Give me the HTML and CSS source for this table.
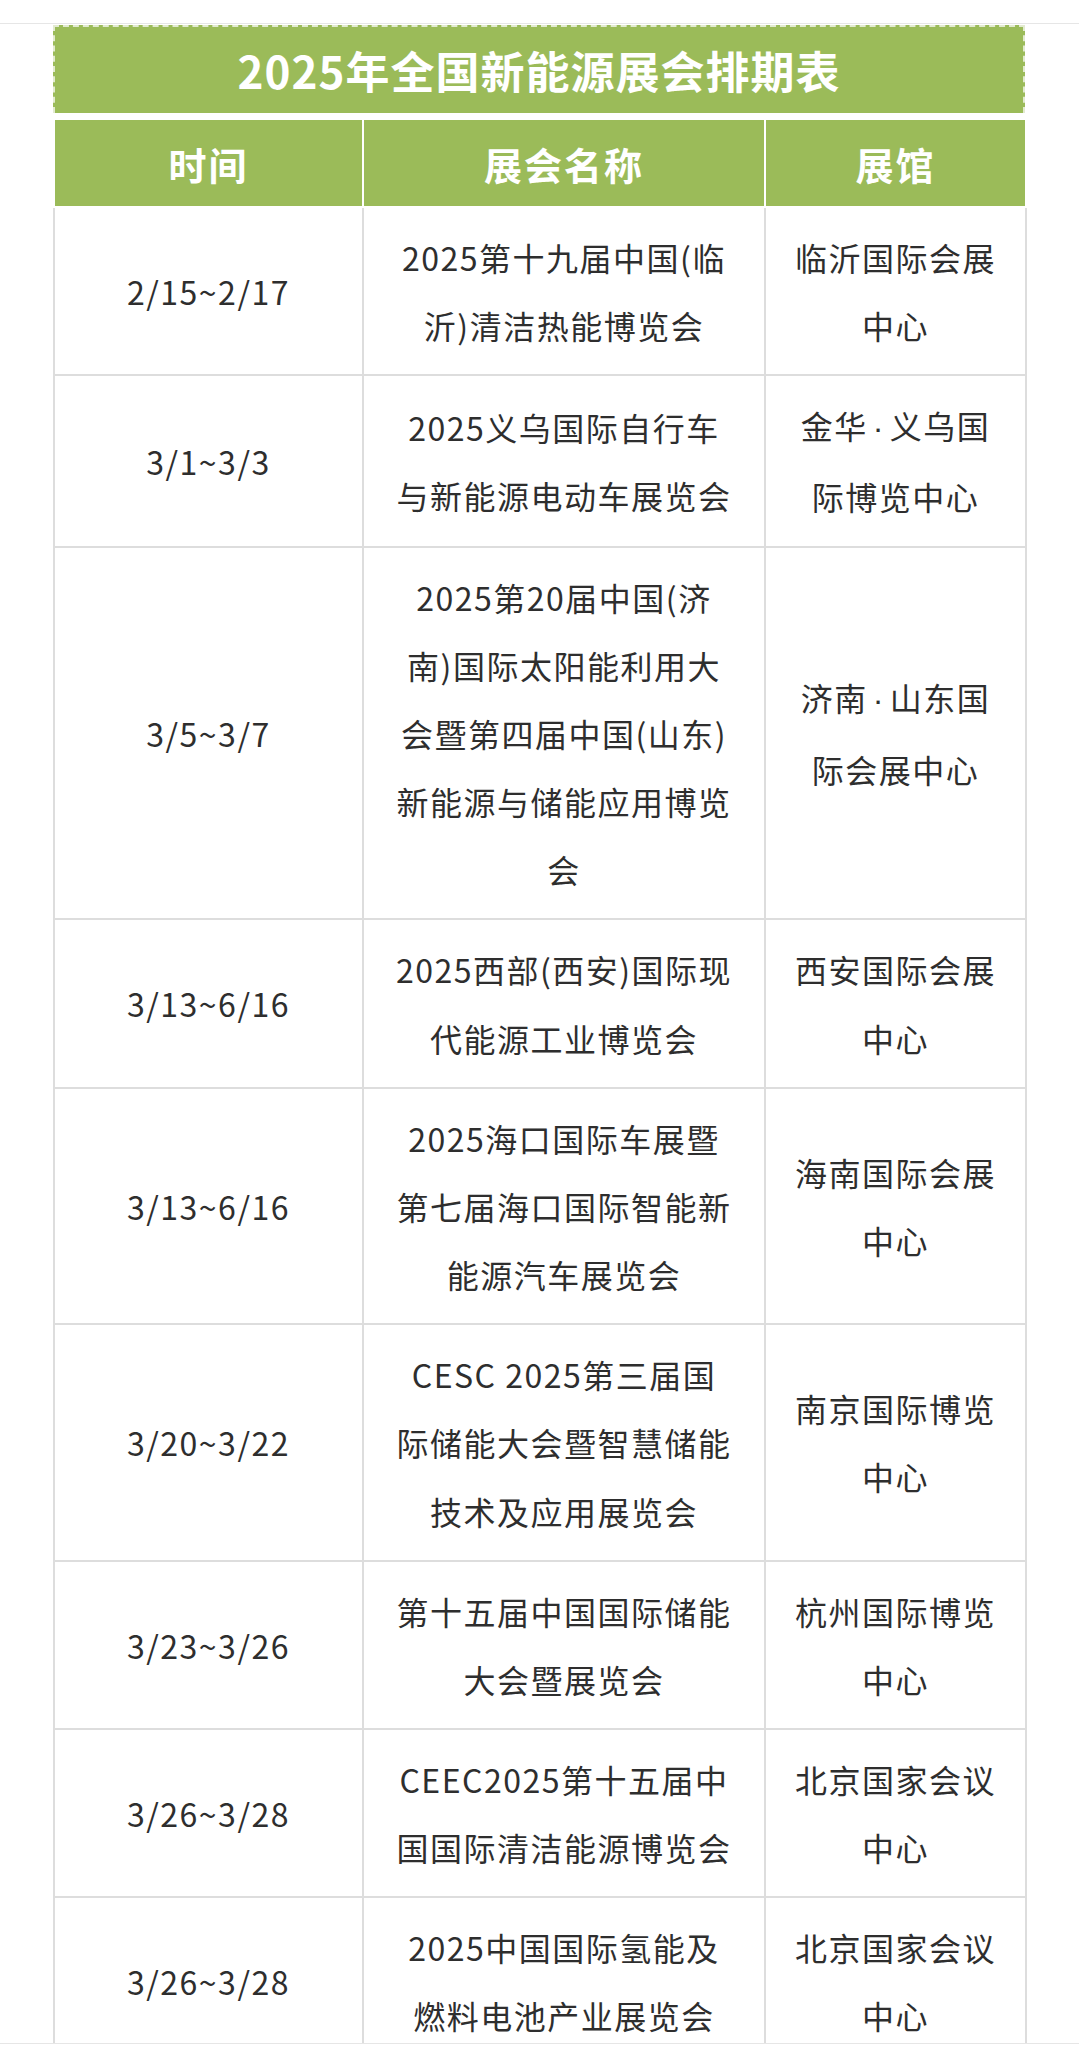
FILE: index.html
```html
<!DOCTYPE html>
<html lang="zh-CN">
<head>
<meta charset="utf-8">
<title>2025年全国新能源展会排期表</title>
<link rel="stylesheet" href="styles.css">
</head>
<body>
<div class="page">
  <div class="frame">
    <div class="sheet">
      <div class="title">2025年全国新能源展会排期表</div>
      <table class="schedule">
        <colgroup>
          <col class="c-date">
          <col class="c-name">
          <col class="c-venue">
        </colgroup>
        <thead>
          <tr><th>时间</th><th>展会名称</th><th>展馆</th></tr>
        </thead>
        <tbody>
          <tr><td>2/15~2/17</td><td>2025第十九届中国(临<br>沂)清洁热能博览会</td><td>临沂国际会展<br>中心</td></tr>
          <tr><td>3/1~3/3</td><td>2025义乌国际自行车<br>与新能源电动车展览会</td><td>金华<span class="dot">·</span>义乌国<br>际博览中心</td></tr>
          <tr><td>3/5~3/7</td><td>2025第20届中国(济<br>南)国际太阳能利用大<br>会暨第四届中国(山东)<br>新能源与储能应用博览<br>会</td><td>济南<span class="dot">·</span>山东国<br>际会展中心</td></tr>
          <tr><td>3/13~6/16</td><td>2025西部(西安)国际现<br>代能源工业博览会</td><td>西安国际会展<br>中心</td></tr>
          <tr><td>3/13~6/16</td><td>2025海口国际车展暨<br>第七届海口国际智能新<br>能源汽车展览会</td><td>海南国际会展<br>中心</td></tr>
          <tr><td>3/20~3/22</td><td>CESC 2025第三届国<br>际储能大会暨智慧储能<br>技术及应用展览会</td><td>南京国际博览<br>中心</td></tr>
          <tr><td>3/23~3/26</td><td>第十五届中国国际储能<br>大会暨展览会</td><td>杭州国际博览<br>中心</td></tr>
          <tr><td>3/26~3/28</td><td>CEEC2025第十五届中<br>国国际清洁能源博览会</td><td>北京国家会议<br>中心</td></tr>
          <tr><td>3/26~3/28</td><td>2025中国国际氢能及<br>燃料电池产业展览会</td><td>北京国家会议<br>中心</td></tr>
        </tbody>
      </table>
    </div>
  </div>
</div>
</body>
</html>
```

FILE: styles.css
```css
html, body {
  margin: 0;
  padding: 0;
  background: #ffffff;
}

body {
  font-family: "Noto Sans CJK SC", "Noto Sans", sans-serif;
  color: #2e2e2e;
}

.page {
  padding-top: 23px;
}

.frame {
  height: 2019px;
  overflow: hidden;
  border-top: 1px solid #e6e6e6;
  border-bottom: 1px solid #e6e6e6;
}

.sheet {
  width: 972px;
  margin-left: 53px;
  padding-top: 1px;
}

.title {
  box-sizing: border-box;
  height: 88px;
  background: #9bbb59;
  border: 2px dashed #e2ead0;
  border-bottom: none;
  color: #ffffff;
  font-weight: 700;
  font-size: 44px;
  letter-spacing: 1px;
  display: flex;
  align-items: center;
  justify-content: center;
  margin-bottom: 5px;
}

.schedule {
  width: 972px;
  table-layout: fixed;
  border-collapse: collapse;
}

.c-date { width: 309px; }
.c-name { width: 402px; }
.c-venue { width: 261px; }

.schedule th {
  height: 86px;
  padding: 0;
  background: #9bbb59;
  color: #ffffff;
  font-weight: 700;
  font-size: 38px;
  letter-spacing: 2px;
  border: 2px solid #ffffff;
  text-align: center;
  vertical-align: middle;
}

.schedule td {
  padding: 15px 12px;
  border: 2px solid #dddddd;
  font-size: 32px;
  line-height: 68.15px;
  letter-spacing: 1.5px;
  text-align: center;
  vertical-align: middle;
  white-space: nowrap;
}

.dot {
  font-family: "Liberation Sans", sans-serif;
  padding: 0 5px;
}
```
